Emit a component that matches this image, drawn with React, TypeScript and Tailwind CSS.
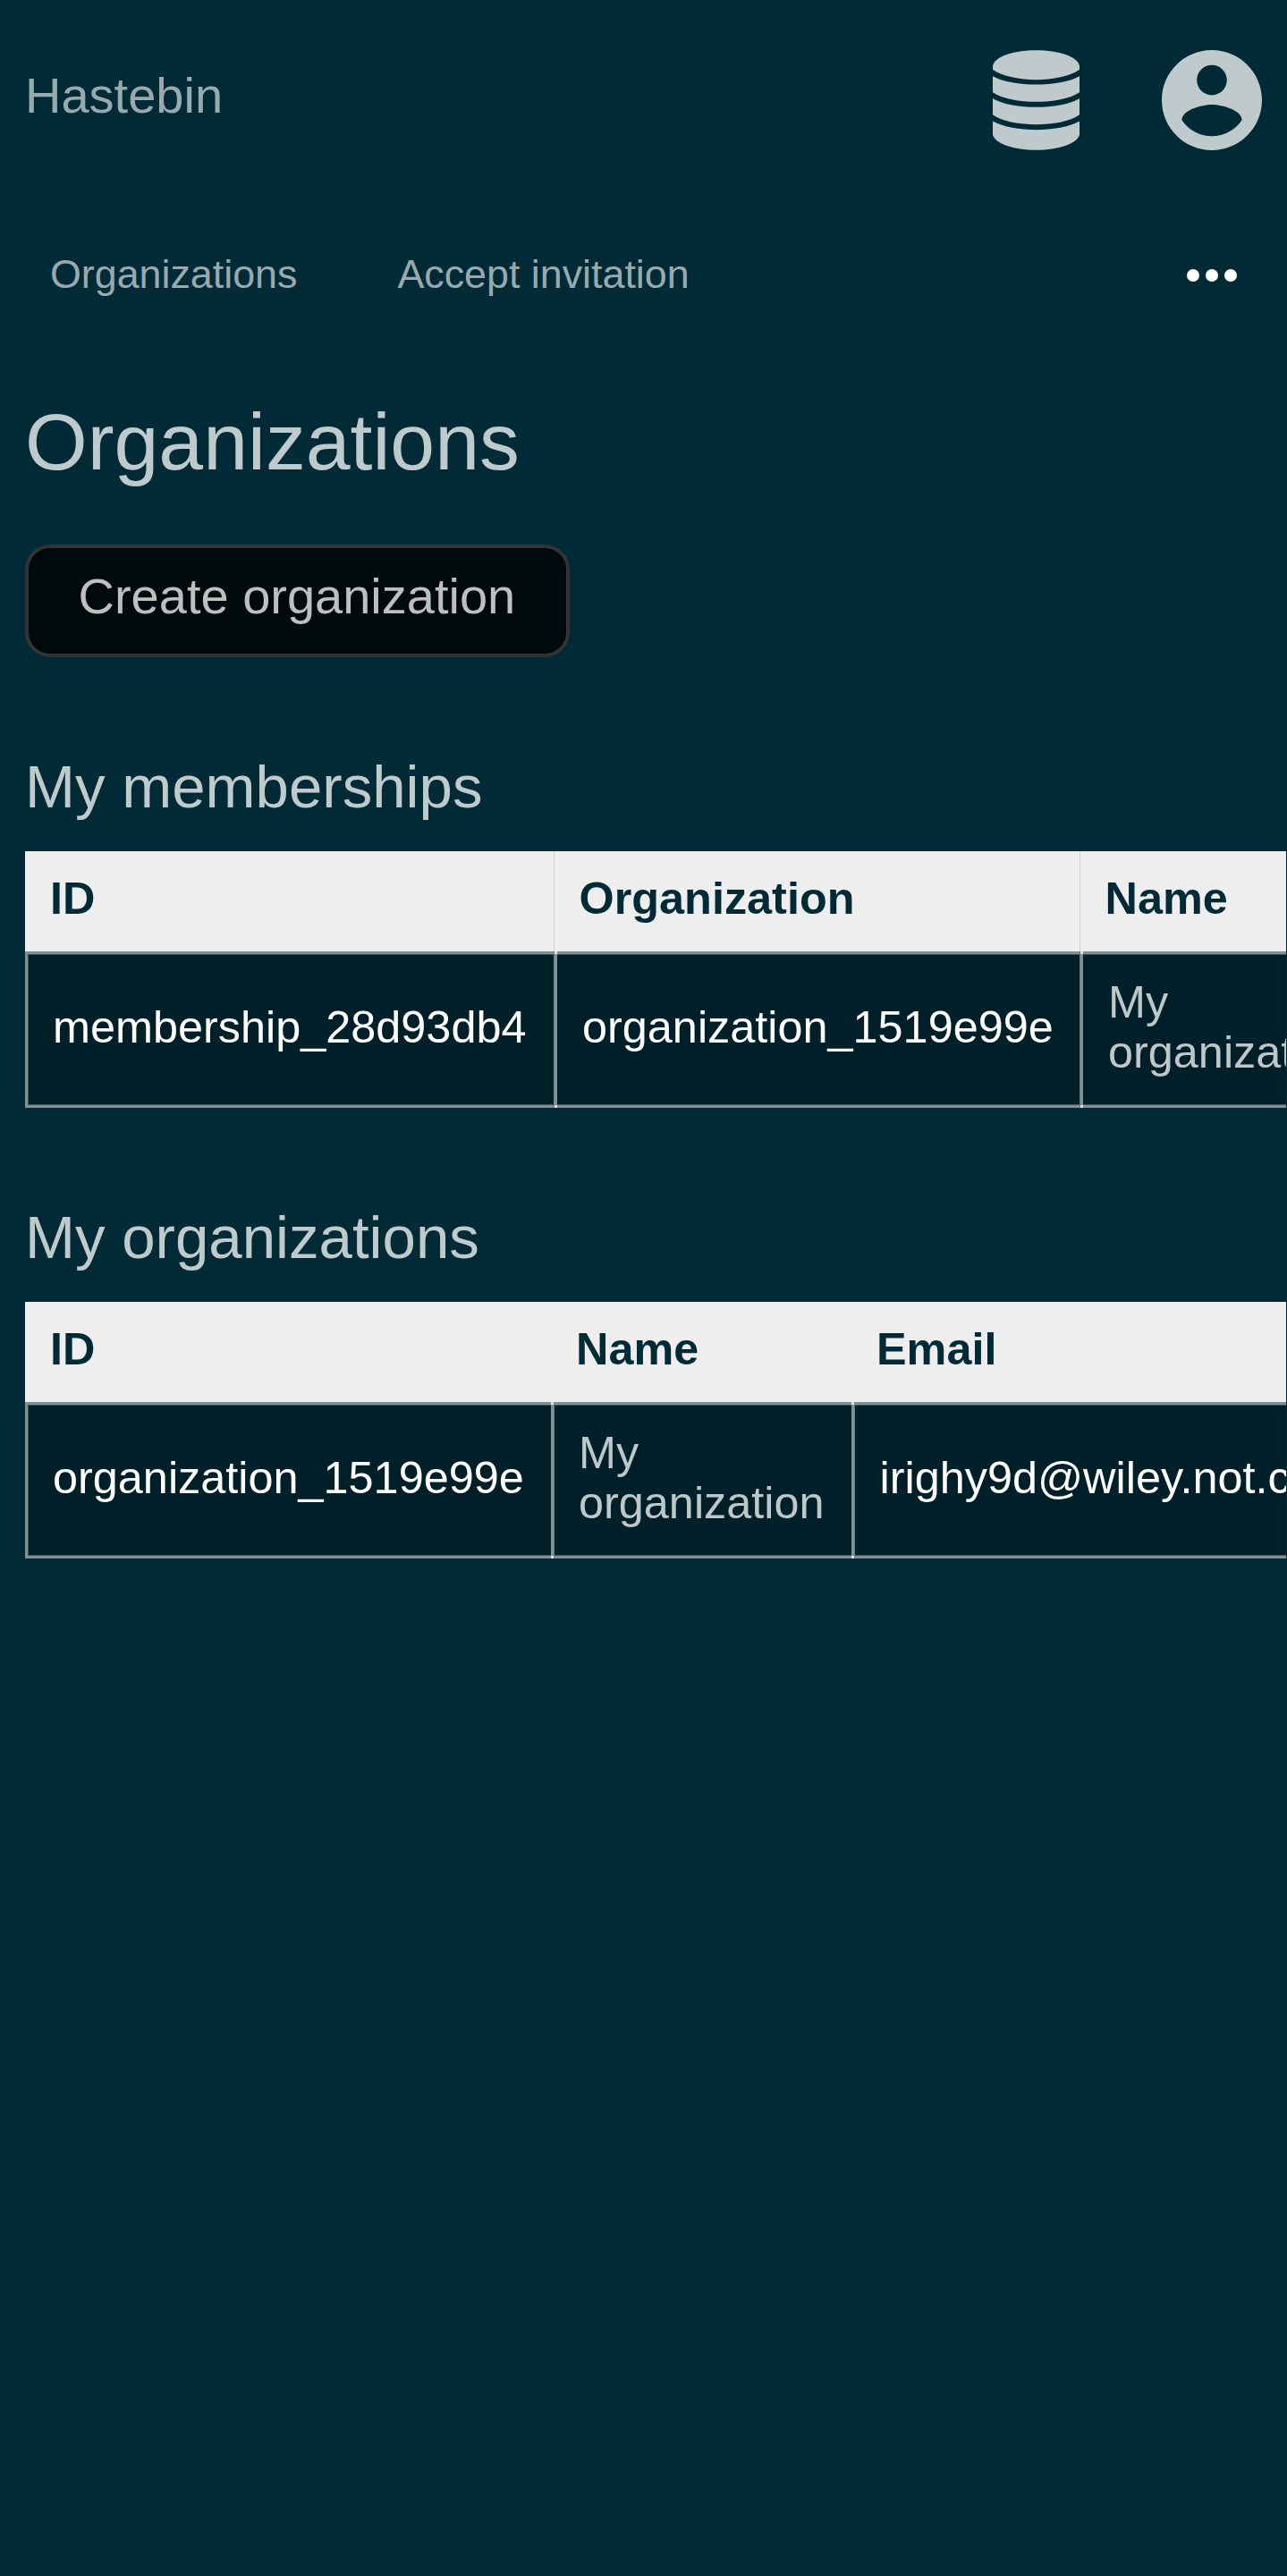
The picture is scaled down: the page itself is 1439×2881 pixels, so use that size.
import React from "react";

type Column = { label: string; width: string; divider?: boolean };
type Cell = { lines: string[]; muted?: boolean; pad: string };

function DatabaseIcon() {
  return (
    <svg className="h-[112px] w-[97px] fill-[#bfcacd]" viewBox="90 78 291 335">
      <path d="M90 131C95 99 160 78 235.500 78S376 99 381 131V143C350 166 290 177 235.500 177S121 166 90 143Z" />
      <path d="M90 165C125 184 180 193 235.500 193S346 184 381 165V219C350 241 290 251 235.500 251S121 241 90 219Z" />
      <path d="M90 240C125 260 180 269 235.500 269S346 260 381 240V294C350 317 290 327 235.500 327S121 317 90 294Z" />
      <path d="M90 316C125 336 180 345 235.500 345S346 336 381 316V362C373 392 311 413 235.500 413S98 392 90 362Z" />
    </svg>
  );
}

function AccountIcon() {
  return (
    <svg className="size-[112px] fill-[#bfcacd]" viewBox="2 2 20 20">
      <path d="M12 2C6.480 2 2 6.480 2 12s4.480 10 10 10 10-4.480 10-10S17.520 2 12 2zm0 3c1.660 0 3 1.340 3 3s-1.340 3-3 3-3-1.340-3-3 1.340-3 3-3zm0 14.200c-2.500 0-4.710-1.280-6-3.220.030-1.990 4-3.080 6-3.080 1.990 0 5.970 1.090 6 3.080-1.290 1.940-3.500 3.220-6 3.220z" />
    </svg>
  );
}

function MoreIcon() {
  return (
    <svg className="h-[14px] w-[56px] fill-white" viewBox="0 0 16 4">
      <circle cx="2" cy="2" r="2" />
      <circle cx="8" cy="2" r="2" />
      <circle cx="14" cy="2" r="2" />
    </svg>
  );
}

function DataTable({ columns, cells }: { columns: Column[]; cells: Cell[] }) {
  return (
    <div className="ml-[28px] w-[1410px] overflow-hidden text-[50.4px] leading-[56px]">
      <div className="flex h-[112px] w-max bg-[#eee] font-bold text-[#002b36]">
        {columns.map((c) => (
          <div
            key={c.label}
            className={`${c.width} shrink-0 pt-[25px] ${c.divider ? "border-l border-[#cfd1d2] pl-[27.5px]" : "pl-[28px]"}`}
          >
            {c.label}
          </div>
        ))}
      </div>
      <div className="flex h-[175px] w-max">
        {cells.map((cell, i) => (
          <div
            key={i}
            className={`${columns[i].width} ${cell.pad} relative flex shrink-0 flex-col justify-center border-y-3 border-[#809195] bg-[#002029] pb-[5px] whitespace-nowrap ${
              i === 0
                ? "border-l-3 shadow-[inset_1px_1px_0_#40585f,inset_0_-1px_0_#40585f]"
                : "border-l-4 shadow-[inset_0_1px_0_#40585f,inset_0_-1px_0_#40585f]"
            } ${cell.muted ? "text-[#bfc7c9]" : "text-white"}`}
          >
            {cell.lines.map((line) => (
              <div key={line}>{line}</div>
            ))}
            {i > 0 && (
              <>
                <span className="absolute -top-[3px] -left-1 h-[3px] w-1 bg-[#dfe3e4]" />
                <span className="absolute -bottom-[3px] -left-1 h-[3px] w-1 bg-[#dfe3e4]" />
                <span
                  className={`absolute -top-[3px] -bottom-[3px] w-px bg-[#6a7e83] ${columns[i].divider ? "-left-1" : "-left-px"}`}
                />
              </>
            )}
          </div>
        ))}
      </div>
    </div>
  );
}

export default function App() {
  return (
    <div className="h-[2881px] w-[1439px] overflow-hidden bg-[#002b36] font-['Liberation_Sans',Arial,sans-serif] text-[#bfcacd]">
      <header className="flex h-[224px] items-start justify-between px-[28px] pt-[56px]">
        <div className="mt-[19px] text-[56px] leading-[64px] text-[#99aaaf]">Hastebin</div>
        <div className="flex gap-[92px]">
          <DatabaseIcon />
          <AccountIcon />
        </div>
      </header>
      <nav className="flex h-[168px] items-center gap-[112px] px-[56px] text-[44.8px] leading-[56px] text-[#99aaaf]">
        <span className="pb-[4px]">Organizations</span>
        <span className="pb-[4px]">Accept invitation</span>
        <span className="ml-auto">
          <MoreIcon />
        </span>
      </nav>
      <h1 className="mt-[50px] ml-[28px] h-[167px] text-[89.6px] leading-[104px]">Organizations</h1>
      <button className="ml-[28px] flex h-[126px] w-[609px] rounded-[28px] border-4 border-[#333] bg-[#00090b] pt-[22px] pl-[55.5px] text-[56px] leading-[64px] whitespace-nowrap text-[#bfbfbf]">
        Create organization
      </button>
      <h2 className="mt-[106px] ml-[28px] h-[111px] text-[67.2px] leading-[78px]">My memberships</h2>
      <DataTable
        columns={[
          { label: "ID", width: "w-[591px]" },
          { label: "Organization", width: "w-[588px]", divider: true },
          { label: "Name", width: "w-[340px]", divider: true },
        ]}
        cells={[
          { lines: ["membership_28d93db4"], pad: "pl-[28px]" },
          { lines: ["organization_1519e99e"], pad: "pl-[28px]" },
          { lines: ["My", "organization"], muted: true, pad: "pl-[28px]" },
        ]}
      />
      <h2 className="mt-[106px] ml-[28px] h-[111px] text-[67.2px] leading-[78px]">My organizations</h2>
      <DataTable
        columns={[
          { label: "ID", width: "w-[588px]" },
          { label: "Name", width: "w-[336px]" },
          { label: "Email", width: "w-[620px]" },
        ]}
        cells={[
          { lines: ["organization_1519e99e"], pad: "pl-[28px]" },
          { lines: ["My", "organization"], muted: true, pad: "pl-[27px]" },
          { lines: ["irighy9d@wiley.not.com"], pad: "pl-[27.5px]" },
        ]}
      />
    </div>
  );
}
